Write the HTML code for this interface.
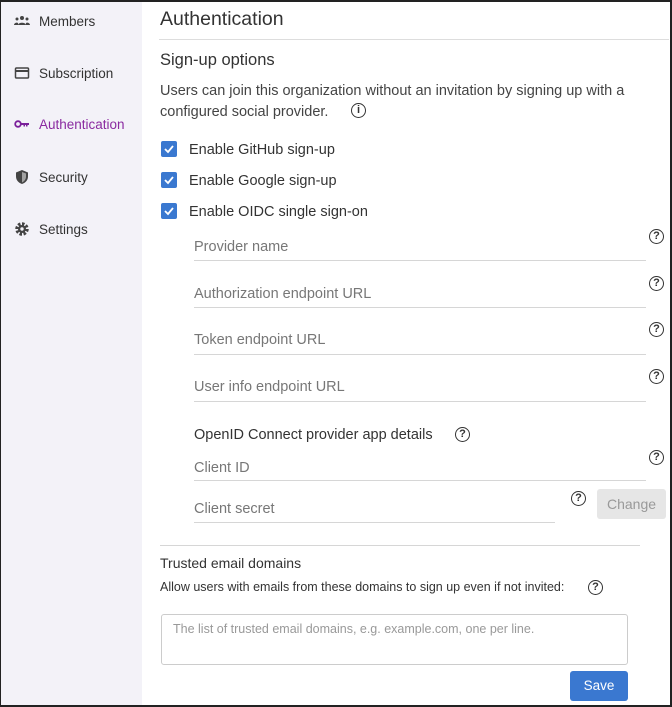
<!DOCTYPE html>
<html><head><style>
*{box-sizing:border-box;margin:0;padding:0}
body{width:672px;height:707px;overflow:hidden;font-family:"Liberation Sans",sans-serif;background:#fff;position:relative;color:#333}
.frame{position:absolute;left:0;top:0;width:672px;height:707px;border:1px solid #222;border-top:2px solid #222;border-right:2px solid #222;border-bottom:2px solid #222;pointer-events:none}
.side{position:absolute;left:0;top:0;width:142px;height:707px;background:#f3f2f8}
.ni{position:absolute;left:14px;font-size:13.5px;color:#333;display:flex;align-items:center}
.ni svg{width:16px;height:16px;margin-right:9px}
.a{position:absolute;white-space:nowrap}
.cb{position:absolute;left:161px;width:16px;height:16px;background:#3a78d0;border-radius:2px}
.cb svg{position:absolute;left:2px;top:2px}
.lbl{position:absolute;left:194px;font-size:14.5px;color:#777}
.ul{position:absolute;height:1px;background:#d6d6d6}
.q{position:absolute;width:15px;height:15px;border:1.4px solid #333;border-radius:50%;font-size:11px;font-weight:bold;text-align:center;line-height:13px;color:#333}
</style></head><body>
<div class="side"></div>
<div class="ni" style="top:13px"><svg viewBox="0 0 16 16"><circle cx="8" cy="5" r="2" fill="#444"/><circle cx="3" cy="6" r="1.5" fill="#444"/><circle cx="13" cy="6" r="1.5" fill="#444"/><path d="M4 12c0-3 8-3 8 0zM0 12c0-2 3-3 4-2v2zM16 12c0-2-3-3-4-2v2z" fill="#444"/></svg>Members</div>
<div class="ni" style="top:65px"><svg viewBox="0 0 16 16"><rect x="1.5" y="3" width="13" height="10" rx="1" fill="none" stroke="#444" stroke-width="1.5"/><rect x="1.5" y="5" width="13" height="2" fill="#444"/></svg>Subscription</div>
<div class="ni" style="top:116px;color:#8a2aa0"><svg viewBox="0 0 16 16"><circle cx="4" cy="8" r="2.8" fill="none" stroke="#7a1f9a" stroke-width="1.8"/><path d="M6.5 7h8.5v2h-1.5v1.5h-1.5V9h-1v1.5H9.5V9h-3z" fill="#7a1f9a"/></svg>Authentication</div>
<div class="ni" style="top:169px"><svg viewBox="0 0 16 16"><path d="M8 1l6 2.5v4c0 4-3 6.5-6 7.5-3-1-6-3.5-6-7.5v-4z" fill="#444"/><path d="M8 3v10.5c2-1 4-3 4-6V4.5z" fill="#fff" opacity=".5"/></svg>Security</div>
<div class="ni" style="top:221px"><svg viewBox="0 0 16 16"><circle cx="8" cy="8" r="5" fill="none" stroke="#444" stroke-width="3.5" stroke-dasharray="2.4 1.5"/><circle cx="8" cy="8" r="4" fill="#444"/><circle cx="8" cy="8" r="1.7" fill="#f3f2f8"/></svg>Settings</div>

<div class="a" style="left:160px;top:8px;font-size:19.5px;color:#333">Authentication</div>
<div class="ul" style="left:159px;top:39px;width:510px;background:#ddd"></div>
<div class="a" style="left:160px;top:51px;font-size:16.5px">Sign-up options</div>
<div class="a" style="left:160px;top:81px;font-size:14.5px;line-height:21px;color:#444">Users can join this organization without an invitation by signing up with a<br>configured social provider.</div>
<div class="q" style="left:351px;top:103px">i</div>
<div class="cb" style="top:141px"><svg width="12" height="12" viewBox="0 0 12 12"><path d="M2 6l3 3 5-6" fill="none" stroke="#fff" stroke-width="1.8"/></svg></div>
<div class="cb" style="top:172px"><svg width="12" height="12" viewBox="0 0 12 12"><path d="M2 6l3 3 5-6" fill="none" stroke="#fff" stroke-width="1.8"/></svg></div>
<div class="cb" style="top:203px"><svg width="12" height="12" viewBox="0 0 12 12"><path d="M2 6l3 3 5-6" fill="none" stroke="#fff" stroke-width="1.8"/></svg></div>
<div class="a" style="left:189px;top:142px;font-size:14.5px">Enable GitHub sign-up</div>
<div class="a" style="left:189px;top:173px;font-size:14.5px">Enable Google sign-up</div>
<div class="a" style="left:189px;top:204px;font-size:14.5px">Enable OIDC single sign-on</div>

<div class="lbl" style="top:239px">Provider name</div><div class="ul" style="left:194px;top:260px;width:452px"></div><div class="q" style="left:649px;top:229px">?</div>
<div class="lbl" style="top:286px">Authorization endpoint URL</div><div class="ul" style="left:194px;top:307px;width:452px"></div><div class="q" style="left:649px;top:276px">?</div>
<div class="lbl" style="top:332px">Token endpoint URL</div><div class="ul" style="left:194px;top:354px;width:452px"></div><div class="q" style="left:649px;top:322px">?</div>
<div class="lbl" style="top:379px">User info endpoint URL</div><div class="ul" style="left:194px;top:401px;width:452px"></div><div class="q" style="left:649px;top:369px">?</div>
<div class="a" style="left:194px;top:427px;font-size:14.5px">OpenID Connect provider app details</div><div class="q" style="left:455px;top:427px">?</div>
<div class="lbl" style="top:460px">Client ID</div><div class="ul" style="left:194px;top:480px;width:452px"></div><div class="q" style="left:649px;top:450px">?</div>
<div class="lbl" style="top:501px">Client secret</div><div class="ul" style="left:194px;top:522px;width:361px"></div><div class="q" style="left:571px;top:491px">?</div>
<div class="a" style="left:597px;top:489px;width:69px;height:30px;background:#e6e6e6;border-radius:3px;color:#999;font-size:14px;text-align:center;line-height:30px">Change</div>
<div class="ul" style="left:160px;top:545px;width:480px"></div>
<div class="a" style="left:160px;top:555px;font-size:14px">Trusted email domains</div>
<div class="a" style="left:160px;top:580px;font-size:12.5px;color:#333">Allow users with emails from these domains to sign up even if not invited:</div>
<div class="q" style="left:588px;top:580px">?</div>
<div class="a" style="left:161px;top:614px;width:467px;height:51px;border:1px solid #ccc;border-radius:3px;font-size:12.5px;color:#999;padding:7px 11px">The list of trusted email domains, e.g. example.com, one per line.</div>
<div class="a" style="left:570px;top:671px;width:58px;height:30px;background:#3a78d0;border-radius:3px;color:#fff;font-size:13.5px;text-align:center;line-height:30px">Save</div>
<div class="frame"></div>
</body></html>
